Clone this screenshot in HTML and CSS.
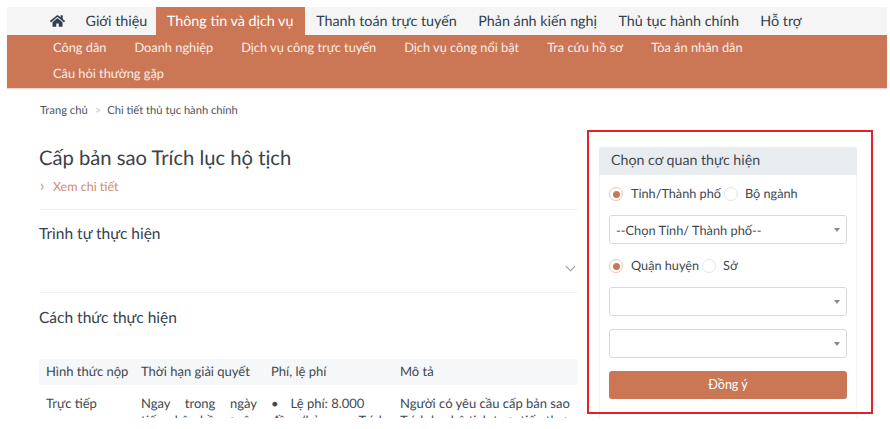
FILE: index.html
```html
<!DOCTYPE html>
<html lang="vi">
<head>
<meta charset="utf-8">
<title>Cấp bản sao Trích lục hộ tịch</title>
<link rel="stylesheet" href="styles.css">
</head>
<body>
<div class="page">
  <nav class="topnav">
    <a class="home" href="#" aria-label="Trang chủ">
      <svg viewBox="0 0 576 512" width="15" height="14"><path fill="#2f4050" d="M280 148 96 300v164c0 9 7 16 16 16l112-.3c9 0 16-7 16-16V368c0-9 7-16 16-16h64c9 0 16 7 16 16v95.600c0 9 7 16 16 16l112 .4c9 0 16-7 16-16V300L296 148c-5-4-11-4-16 0zM572 251l-84-69V44c0-7-5-12-12-12h-56c-7 0-12 5-12 12v72l-89-74c-18-14-43-14-61 0L4 251c-5 4-6 12-2 17l26 31c4 5 12 6 17 2L280 107c5-4 11-4 16 0l235 194c5 4 13 3 17-2l26-31c4-5 3-13-2-17z"/></svg>
    </a>
    <a class="tab intro" href="#">Giới thiệu</a>
    <a class="tab active" href="#">Thông tin và dịch vụ</a>
    <a class="tab" href="#">Thanh toán trực tuyến</a>
    <a class="tab" href="#">Phản ánh kiến nghị</a>
    <a class="tab" href="#">Thủ tục hành chính</a>
    <a class="tab" href="#">Hỗ trợ</a>
  </nav>
  <nav class="subnav">
    <a href="#">Công dân</a>
    <a href="#">Doanh nghiệp</a>
    <a href="#">Dịch vụ công trực tuyến</a>
    <a href="#">Dịch vụ công nổi bật</a>
    <a href="#">Tra cứu hồ sơ</a>
    <a href="#">Tòa án nhân dân</a>
    <a href="#">Câu hỏi thường gặp</a>
  </nav>
  <div class="breadcrumb"><a href="#">Trang chủ</a><span class="sep">&gt;</span><a href="#">Chi tiết thủ tục hành chính</a></div>
  <div class="layout">
    <main class="content">
      <h1>Cấp bản sao Trích lục hộ tịch</h1>
      <a class="more" href="#"><span class="more-mark">›</span>Xem chi tiết</a>
      <section class="block first">
        <h2>Trình tự thực hiện</h2>
        <div class="chev-row">
          <svg viewBox="0 0 12 7" width="11" height="7"><path d="M1 1l5 5 5-5" fill="none" stroke="#8f9498" stroke-width="1.100"/></svg>
        </div>
      </section>
      <section class="block">
        <h2>Cách thức thực hiện</h2>
        <table>
          <colgroup><col class="c1"><col class="c2"><col class="c3"><col class="c4"></colgroup>
          <thead>
            <tr><th>Hình thức nộp</th><th>Thời hạn giải quyết</th><th>Phí, lệ phí</th><th>Mô tả</th></tr>
          </thead>
          <tbody>
            <tr>
              <td>Trực tiếp</td>
              <td class="just">Ngay trong ngày tiếp nhận hồ sơ yêu cầu</td>
              <td class="just"><span class="dot">•</span>Lệ phí: 8.000<br>đồng/bản sao Trích lục</td>
              <td>Người có yêu cầu cấp bản sao Trích lục hộ tịch trực tiếp thực</td>
            </tr>
          </tbody>
        </table>
      </section>
    </main>
    <aside class="panel">
      <div class="panel-head">Chọn cơ quan thực hiện</div>
      <form class="panel-body">
        <div class="radios">
          <span class="radio on"></span><span class="radio-label">Tỉnh/Thành phố</span>
          <span class="radio"></span><span class="radio-label">Bộ ngành</span>
        </div>
        <div class="select"><span>--Chọn Tỉnh/ Thành phố--</span><i class="caret"></i></div>
        <div class="radios">
          <span class="radio on"></span><span class="radio-label">Quận huyện</span>
          <span class="radio"></span><span class="radio-label">Sở</span>
        </div>
        <div class="select"><span></span><i class="caret"></i></div>
        <div class="select"><span></span><i class="caret"></i></div>
        <button class="submit" type="button">Đồng ý</button>
      </form>
    </aside>
    <div class="highlight"></div>
  </div>
</div>
</body>
</html>
```
FILE: styles.css
```css
* { box-sizing: border-box; }
html, body { margin: 0; height: 429px; overflow: hidden; background: #fff; }
body { font-family: "Lato", "Open Sans", sans-serif; color: #3d4852; font-size: 13px; text-rendering: geometricPrecision; }
a { color: inherit; text-decoration: none; }
.page { padding: 7px 3px 0 7px; height: 418px; overflow: hidden; }

.topnav { display: flex; align-items: stretch; height: 28px; background: #f5f5f5; padding-left: 43px; font-size: 14.300px; color: #2f4050; }
.home { display: flex; align-items: center; padding-right: 9.750px; }
.tab { display: flex; align-items: center; padding: 0 10.750px; }
.tab.intro { padding-right: 9px; }
.tab.active { background: #cb7755; color: #fff; padding-right: 12px; }

.subnav { background: #cb7755; color: #fbeee8; padding: 0 46px; height: 53px; display: flex; flex-wrap: wrap; column-gap: 28px; align-content: flex-start; font-size: 12.800px; box-shadow: 0 1px 1px #e8d5cc; }
.subnav a { height: 26px; line-height: 25px; }

.breadcrumb { margin: 16px 0 0 33px; font-size: 11.200px; line-height: 14px; color: #4c5660; }
.sep { margin: 0 6px 0 7px; color: #c4c7ca; }

.layout { position: relative; display: flex; gap: 21px; padding-left: 32px; align-items: flex-start; }
.content { width: 539px; flex: none; padding-top: 26px; }
h1 { margin: 0; font-size: 20.200px; font-weight: 400; line-height: 28px; color: #3c4146; }
.more { display: block; margin-top: 7px; font-size: 12.500px; line-height: 16px; color: #d08b70; }
.more-mark { display: inline-block; width: 14px; font-size: 16px; line-height: 14px; padding-left: 1px; }

.block { border-top: 1px solid #f1f2f3; }
.block.first { margin-top: 14px; padding-top: 14px; height: 83px; }
h2 { margin: 0; font-size: 15.500px; font-weight: 400; line-height: 20px; color: #33424f; }
.block:not(.first) { padding-top: 15px; }
.chev-row { display: flex; justify-content: flex-end; padding: 21px 2px 0 0; }

table { width: 100%; margin-top: 31px; border-collapse: collapse; table-layout: fixed; font-size: 13px; }
.c1 { width: 95px; } .c2 { width: 130px; } .c3 { width: 129px; }
th { background: #f6f7f8; font-weight: 400; text-align: left; height: 26px; padding: 0 7px 2px; white-space: nowrap; color: #3d4852; }
td { vertical-align: top; padding: 10px 7px 0; line-height: 17px; }
td:last-child { padding-right: 4px; }
.just { text-align: justify; }
.dot { margin-right: 12px; }

.panel { width: 258px; flex: none; margin-top: 29px; border: 1px solid #f3f3f3; border-radius: 2px 2px 0 0; height: 280px; }
.panel-head { background: #e9ecef; height: 28px; margin: -1px -1px 0; line-height: 27px; padding-left: 12px; font-size: 14.200px; color: #3d4852; border-radius: 2px 2px 0 0; }
.panel-body { padding: 0 9px; }
.radios { display: flex; align-items: center; height: 18px; margin-top: 10px; font-size: 12.700px; }
.radio { width: 14px; height: 14px; border: 1px solid #e4e4e4; border-radius: 50%; background: #fff; flex: none; position: relative; }
.radio.on { border-color: #e6c5b7; }
.radio.on::after { content: ""; position: absolute; left: 2.500px; top: 2.500px; width: 7px; height: 7px; border-radius: 50%; background: #cb7755; }
.radio-label { margin: 0 0 2px 8px; }
.radio-label + .radio { margin-left: 3px; }
.radio + .radio-label { margin-left: 7px; }
.radio.on + .radio-label { margin-left: 8px; }
.select { display: flex; align-items: center; justify-content: space-between; height: 29px; margin-top: 13px; padding: 0 6px; border: 1px solid #d9d9d9; border-radius: 3px; background: #fff; font-size: 12.800px; }
.radios + .select { margin-top: 12px; }
.select + .radios { margin-top: 13px; }
.caret { width: 0; height: 0; border: 3px solid transparent; border-top: 4px solid #888; border-bottom: 0; }
.submit { display: block; width: 100%; height: 28px; margin-top: 13px; border: 0; border-radius: 3px; background: #cb7755; color: #fff; font: inherit; font-size: 12.500px; padding-bottom: 3px; }

.highlight { position: absolute; left: 580px; top: 12px; width: 286px; height: 284px; border: 2px solid #e3202c; pointer-events: none; }
```
